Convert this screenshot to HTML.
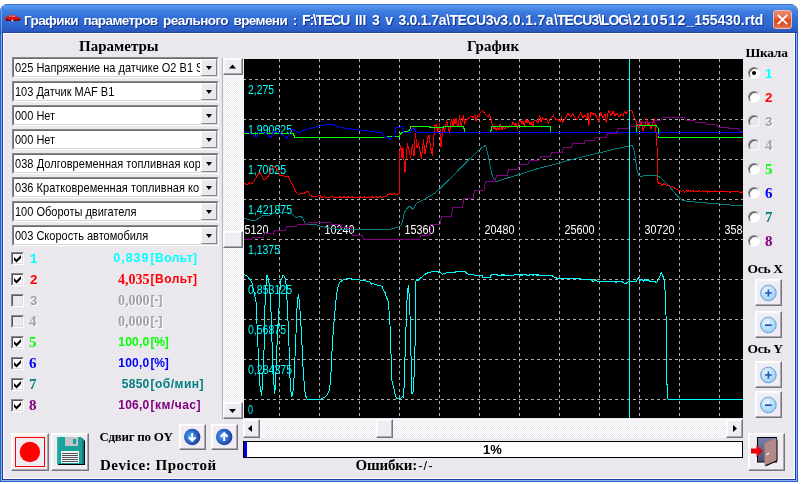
<!DOCTYPE html>
<html lang="ru"><head><meta charset="utf-8"><title>Графики параметров реального времени</title>
<style>
html,body{margin:0;padding:0;background:#fff;}
body{width:803px;height:484px;position:relative;overflow:hidden;will-change:transform;font-family:"Liberation Sans",sans-serif;}
.abs{position:absolute;}
#win{position:absolute;left:0;top:4px;width:798px;height:478px;background:#2a5cd0;border-radius:8px 8px 0 0;overflow:hidden;}
#title{position:absolute;left:0;top:0;width:798px;height:29px;background:linear-gradient(#2856c4 0%,#5b9af0 5%,#5291ea 12%,#3f7fe0 24%,#3370d8 45%,#2e67d0 70%,#2c5fc8 86%,#2a56bc 95%,#1c3c98 100%);}
#ttext{position:absolute;left:24px;top:9px;color:#fff;font:bold 14px/15px "Liberation Sans",sans-serif;white-space:pre;text-shadow:1px 1px 0 #14308a;}
#client{position:absolute;left:4px;top:30px;width:790px;height:444px;background:#ebe8ed;}
#cwhite{position:absolute;left:3px;top:29px;width:792px;height:446px;background:#fff;}
#close{position:absolute;left:773px;top:6px;width:17px;height:17px;border:1px solid #f2b9aa;border-radius:3px;background:linear-gradient(#e98a6e 0%,#df6c4a 42%,#e04a1e 52%,#da5630 80%,#e27c5e 100%);}
.h{font:bold 15px "Liberation Serif",serif;color:#000;white-space:nowrap;}
.hs{font:bold 13px/15px "Liberation Serif",serif;color:#000;white-space:nowrap;letter-spacing:-0.3px}
.combo{position:absolute;left:12px;width:207px;height:21px;box-sizing:border-box;background:#fff;border:1px solid;border-color:#8a8a8a #fff #fff #8a8a8a;}
.combo .in{position:absolute;left:0;top:0;right:0;bottom:0;border:1px solid;border-color:#6a6a6a #d8d5da #d8d5da #6a6a6a;}
.combo span{position:absolute;left:2px;top:3px;font:11px/13px "Liberation Sans",sans-serif;color:#000;white-space:nowrap;overflow:hidden;width:185px;transform:scaleY(1.125);transform-origin:0 0;}
.combo b{position:absolute;right:1px;top:1px;width:16px;height:17px;box-sizing:border-box;background:#ebe8ee;border:1px solid;border-color:#fff #8a8a8a #8a8a8a #fff;}
.combo b:after{content:"";position:absolute;left:3.5px;top:6px;border:4px solid transparent;border-top:4px solid #000;border-bottom:none;border-left-width:3.5px;border-right-width:3.5px}
.btn{position:absolute;box-sizing:border-box;background:#efedf1;border:1px solid;border-color:#fff #77757d #77757d #fff;box-shadow:inset -1px -1px 0 #a9a7af,inset 1px 1px 0 #faf9fb;}
.track{position:absolute;background:repeating-conic-gradient(#fff 0 25%,#ebe8ee 0 50%) 0 0/2px 2px;}
.cb{position:absolute;left:11px;width:13px;height:13px;box-sizing:border-box;background:#fff;border:1px solid;border-color:#8a8a8a #fff #fff #8a8a8a;}
.cb i{position:absolute;left:0;top:0;right:0;bottom:0;border:1px solid;border-color:#55555a #dcdae0 #dcdae0 #55555a;}
.cb.dis{background:#ebe8ee}
.num{position:absolute;left:29px;font:bold 15px/15px "Liberation Serif",serif;white-space:nowrap;}
.num.a{font:bold 13.33px/15px "Liberation Sans",sans-serif;left:30px}
.val{position:absolute;right:653.5px;font:bold 12px/15px "Liberation Sans",sans-serif;white-space:nowrap;text-align:right;letter-spacing:0.25px}
.val.s{font-family:"Liberation Serif",serif;font-size:14px;letter-spacing:0}
.unit{position:absolute;left:150.5px;font:bold 12px/15px "Liberation Sans",sans-serif;white-space:nowrap;letter-spacing:0.5px}
.dis{color:#a3a1a6;text-shadow:1px 1px 0 #fff;}
.radio{position:absolute;left:748px;width:12px;height:12px;border-radius:50%;box-sizing:border-box;background:#fff;border:1px solid;border-color:#8a888e #fbfafc #fbfafc #8a888e;box-shadow:inset 1px 1px 0 #56555a;}
.rnum{position:absolute;left:765px;font:bold 15px/15px "Liberation Serif",serif;white-space:nowrap;}
.rnum.a{font:bold 13.33px/15px "Liberation Sans",sans-serif;}
</style></head><body>
<svg width="0" height="0" style="position:absolute"><defs>
<radialGradient id="gb" cx="0.4" cy="0.45" r="0.65"><stop offset="0" stop-color="#52b0f4"/><stop offset="0.55" stop-color="#2c66cc"/><stop offset="1" stop-color="#1a2f86"/></radialGradient>
<radialGradient id="gl" cx="0.4" cy="0.35" r="0.7"><stop offset="0" stop-color="#eaf6ff"/><stop offset="0.6" stop-color="#b6dcf6"/><stop offset="1" stop-color="#9ccdf2"/></radialGradient>
<linearGradient id="gd" x1="0" y1="0" x2="0" y2="1"><stop offset="0" stop-color="#7a80a8"/><stop offset="1" stop-color="#4a5070"/></linearGradient>
</defs></svg>
<div id="win">
 <div id="title"><svg width="18" height="9" viewBox="0 0 18 9" style="position:absolute;left:4px;top:10px"><path d="M0.800 4.200C1.200 3.200 2.500 2.800 3.800 2.600L5.200 1.300C7 0.700 9.500 0.700 10.800 1.200L12.500 2.800C14.500 3 16.500 3.600 16.800 4.800L16.500 6 14.500 6.800 4 6.800 1.500 6z" fill="#d81414"/><path d="M4.600 2.600L5.800 1.600 7.500 1.400V2.600zM8.200 1.400H10.400L11.600 2.700H8.200z" fill="#f0a8a0"/><path d="M1 5.200C5 5.900 12 6 16.800 5L16.500 6 14.500 6.900H4L1.500 6z" fill="#6a0606"/><ellipse cx="8.300" cy="6.500" rx="0.900" ry="1.100" fill="#e8e0d8"/><ellipse cx="3.200" cy="6.200" rx="0.800" ry="0.900" fill="#400"/></svg><div id="ttext"><span style="font-size:13.5px;letter-spacing:-0.6px;word-spacing:2.4px">Графики параметров реального времени : </span><span style="letter-spacing:-1.15px">F:\TECU</span><span style="letter-spacing:-0.08px;word-spacing:1.8px"> III 3 v </span><span style="letter-spacing:-0.38px">3.0.1.7a</span><span style="letter-spacing:-0.48px">\TECU3v</span><span style="letter-spacing:0.37px">3.0.1.7a</span><span style="letter-spacing:-0.9px">\TECU3</span><span style="letter-spacing:-1.12px">\LOG</span><span style="letter-spacing:1.1px">\210512</span><span style="letter-spacing:0">_155430.rtd</span></div>
 <div style="position:absolute;left:1px;top:6px;width:1px;height:23px;background:rgba(190,220,255,0.45)"></div>
 <div id="close"><svg width="19" height="19" viewBox="0 0 19 19" style="position:absolute;left:-1px;top:-1px"><path d="M4.800 4.800L14.200 14.200M14.200 4.800L4.800 14.200" stroke="#fff" stroke-width="1.800" stroke-linecap="butt"/></svg></div></div>
 <div style="position:absolute;left:1px;top:29px;width:796px;height:448px;background:#8fb8ee"></div><div style="position:absolute;left:2px;top:29px;width:794px;height:447px;background:#1a3aa0"></div>
 <div id="cwhite"></div>
 <div id="client"></div>
</div>
<div class="abs h" style="left:79px;top:38px">Параметры</div>
<div class="abs h" style="left:467px;top:38px">График</div>
<div class="combo" style="top:57px"><div class="in"></div><span>025 Напряжение на датчике O2 B1 S1</span><b></b></div>
<div class="combo" style="top:81px"><div class="in"></div><span>103 Датчик MAF B1</span><b></b></div>
<div class="combo" style="top:105px"><div class="in"></div><span>000 Нет</span><b></b></div>
<div class="combo" style="top:129px"><div class="in"></div><span>000 Нет</span><b></b></div>
<div class="combo" style="top:153px"><div class="in"></div><span style="letter-spacing:0.06px">038 Долговременная топливная коррекция</span><b></b></div>
<div class="combo" style="top:177px"><div class="in"></div><span style="letter-spacing:0.05px">036 Кратковременная топливная коррекция</span><b></b></div>
<div class="combo" style="top:201px"><div class="in"></div><span>100 Обороты двигателя</span><b></b></div>
<div class="combo" style="top:225px"><div class="in"></div><span>003 Скорость автомобиля</span><b></b></div>

<!-- checkbox rows -->
<div class="cb" style="top:252px"><i></i><svg width="13" height="13" viewBox="0 0 13 13" style="position:absolute;left:-1px;top:-1px"><path d="M3 5V8L5.5 10.5 10 6V3L5.5 7.5z" fill="#000"/></svg></div><div class="num a" style="top:251px;color:#00ffff">1</div><div class="val" style="top:251px;color:#00ffff;font-size:12.5px;letter-spacing:1px">0,839</div><div class="unit" style="top:251px;color:#00ffff">[Вольт]</div>
<div class="cb" style="top:273px"><i></i><svg width="13" height="13" viewBox="0 0 13 13" style="position:absolute;left:-1px;top:-1px"><path d="M3 5V8L5.5 10.5 10 6V3L5.5 7.5z" fill="#000"/></svg></div><div class="num a" style="top:272px;color:#ff0000">2</div><div class="val s" style="top:272px;color:#ff0000">4,035</div><div class="unit" style="top:272px;color:#ff0000">[Вольт]</div>
<div class="cb dis" style="top:294px"><i></i></div><div class="num a dis" style="top:293px">3</div><div class="val s dis" style="top:293px">0,000</div><div class="unit dis" style="top:293px"><span style="letter-spacing:0">[-]</span></div>
<div class="cb dis" style="top:315px"><i></i></div><div class="num dis" style="top:314px">4</div><div class="val s dis" style="top:314px">0,000</div><div class="unit dis" style="top:314px"><span style="letter-spacing:0">[-]</span></div>
<div class="cb" style="top:336px"><i></i><svg width="13" height="13" viewBox="0 0 13 13" style="position:absolute;left:-1px;top:-1px"><path d="M3 5V8L5.5 10.5 10 6V3L5.5 7.5z" fill="#000"/></svg></div><div class="num" style="top:335px;color:#00ff00">5</div><div class="val" style="top:335px;color:#00ff00">100,0</div><div class="unit" style="top:335px;color:#00ff00"><span style="letter-spacing:-0.2px">[%]</span></div>
<div class="cb" style="top:357px"><i></i><svg width="13" height="13" viewBox="0 0 13 13" style="position:absolute;left:-1px;top:-1px"><path d="M3 5V8L5.5 10.5 10 6V3L5.5 7.5z" fill="#000"/></svg></div><div class="num" style="top:356px;color:#0000ff">6</div><div class="val" style="top:356px;color:#0000ff">100,0</div><div class="unit" style="top:356px;color:#0000ff"><span style="letter-spacing:-0.2px">[%]</span></div>
<div class="cb" style="top:378px"><i></i><svg width="13" height="13" viewBox="0 0 13 13" style="position:absolute;left:-1px;top:-1px"><path d="M3 5V8L5.5 10.5 10 6V3L5.5 7.5z" fill="#000"/></svg></div><div class="num" style="top:377px;color:#008080">7</div><div class="val" style="top:377px;color:#008080">5850</div><div class="unit" style="top:377px;color:#008080">[об/мин]</div>
<div class="cb" style="top:399px"><i></i><svg width="13" height="13" viewBox="0 0 13 13" style="position:absolute;left:-1px;top:-1px"><path d="M3 5V8L5.5 10.5 10 6V3L5.5 7.5z" fill="#000"/></svg></div><div class="num" style="top:398px;color:#800080">8</div><div class="val" style="top:398px;color:#800080">106,0</div><div class="unit" style="top:398px;color:#800080">[км/час]</div>

<!-- vertical scrollbar -->
<div class="abs" style="left:222px;top:58px;width:1px;height:361px;background:#b4b2b8"></div><div class="track" style="left:223px;top:58px;width:21px;height:361px"></div>
<div class="btn" style="left:223px;top:58px;width:20px;height:17px"><svg width="20" height="17" style="position:absolute;left:-1px;top:-1px"><path d="M6 10.500h7l-3.500-4z" fill="#000"/></svg></div>
<div class="btn" style="left:223px;top:231px;width:20px;height:17px"></div>
<div class="btn" style="left:223px;top:402px;width:20px;height:17px"><svg width="20" height="17" style="position:absolute;left:-1px;top:-1px"><path d="M6 7h7l-3.500 4z" fill="#000"/></svg></div>

<svg id="graph" width="499" height="359" viewBox="244 59 499 359" style="position:absolute;left:244px;top:59px;background:#000" shape-rendering="auto">
<path d="M244 79.5H743M244 119.5H743M244 159.5H743M244 199.5H743M244 239.5H743M244 279.5H743M244 319.5H743M244 359.5H743M244 399.5H743" stroke="#b0b0b0" stroke-width="1" stroke-dasharray="3 3" stroke-dashoffset="1" fill="none" shape-rendering="crispEdges"/>
<path d="M279.5 59V418M319.5 59V418M359.5 59V418M399.5 59V418M439.5 59V418M479.5 59V418M519.5 59V418M559.5 59V418M599.5 59V418M639.5 59V418M679.5 59V418M719.5 59V418" stroke="#b0b0b0" stroke-width="1" stroke-dasharray="3 3" fill="none" shape-rendering="crispEdges"/>
<g fill="#00ffff" font-family="Liberation Sans, sans-serif" font-size="12.5"><text x="248" y="94" textLength="26" lengthAdjust="spacingAndGlyphs">2,275</text><text x="248" y="134" textLength="44" lengthAdjust="spacingAndGlyphs">1,990625</text><text x="248" y="174" textLength="38" lengthAdjust="spacingAndGlyphs">1,70625</text><text x="248" y="214" textLength="44" lengthAdjust="spacingAndGlyphs">1,421875</text><text x="248" y="254" textLength="32" lengthAdjust="spacingAndGlyphs">1,1375</text><text x="248" y="294" textLength="44" lengthAdjust="spacingAndGlyphs">0,853125</text><text x="248" y="334" textLength="38" lengthAdjust="spacingAndGlyphs">0,56875</text><text x="248" y="374" textLength="44" lengthAdjust="spacingAndGlyphs">0,284375</text><text x="248" y="414" textLength="5" lengthAdjust="spacingAndGlyphs">0</text></g>
<g fill="#ffffff" font-family="Liberation Sans, sans-serif" font-size="12.5"><text x="244.5" y="234" textLength="24" lengthAdjust="spacingAndGlyphs">5120</text><text x="324.5" y="234" textLength="30" lengthAdjust="spacingAndGlyphs">10240</text><text x="404.5" y="234" textLength="30" lengthAdjust="spacingAndGlyphs">15360</text><text x="484.5" y="234" textLength="30" lengthAdjust="spacingAndGlyphs">20480</text><text x="564.5" y="234" textLength="30" lengthAdjust="spacingAndGlyphs">25600</text><text x="644.5" y="234" textLength="30" lengthAdjust="spacingAndGlyphs">30720</text><text x="724.5" y="234" textLength="30" lengthAdjust="spacingAndGlyphs">35840</text></g>
<path d="M244 274.5 L247 276 L250 279.5 L252 283 L254 292 L256 302 L256.8 320 L257.5 335 L258.2 352 L259 372 L260 386 L261.5 395.5 L262.5 385 L263.5 360 L264.5 340 L265 305 L266 285 L266.5 276 L267 275.5 L268 278 L269.5 285 L270.2 297 L271 312 L271.5 327 L272 342 L273 365 L274 385 L274.6 393.5 L275.5 385 L276 372 L277 345 L277.8 328 L279 308 L280 290 L281 280 L283 275.5 L284 276 L285.5 279.3 L286.3 286 L287 300 L287.8 317 L288.5 330 L289 346 L289.8 375 L291 392 L292 396.5 L293 391.5 L294 378 L295 357 L296 334 L297 308 L298 297 L298.5 294.5 L299.5 304 L300.6 318 L301.2 330 L302 345 L303 367 L304 381 L305 392 L306 396.5 L307 399 L321 399 L324.5 397.3 L327 395 L329 391.5 L330 385 L331 372.5 L332 351 L333 335 L334 322 L335.5 306 L336.3 297 L337.3 290 L338.3 285.5 L340 282 L343 280 L347.5 278.6 L352 279 L358 279.5 L362.4 280.8 L366 281 L370 282 L371.5 284.2 L373 283 L374.4 284.5 L378 285.3 L382 286.3 L383.3 289.4 L385 292.4 L386 296 L388 300.8 L389 310.4 L390 325.3 L390.6 342 L391.2 360 L391.8 380.6 L393.5 386.6 L395 394 L396.5 398.4 L399.8 398.6 L401 398 L402.5 396.3 L403.5 397.8 L404.2 385 L404.7 365 L405.5 346 L406.2 320 L407 300 L408 288 L408.5 286 L409.2 295.5 L410 315 L410.6 338 L411.2 363 L411.8 393.3 L412.8 393.6 L413.6 386.6 L414.3 370 L414.8 354 L415.3 335 L415.5 282 L416.8 279.7 L417.8 281 L419.5 279 L422.5 276.3 L426.5 273.3 L432.5 271.5 L437 271.5 L440.4 272.7 L442.6 274.2 L445.4 273.5 L447 272.5 L455 272.5 L456 271.5 L465 271.5 L466 272.5 L467.5 274 L473 274.5 L474.5 275.5 L482 275.5 L483 277.5 L490 277.5 L491 275.5 L492 274.5 L497 274.5 L498 275.5 L501 275.5 L502 274.5 L503 275.5 L504 274.5 L505 275.5 L513.5 275.5 L514.5 274.5 L519 274.5 L520 275.5 L521 274.5 L522 275.5 L523 274.5 L526 274.5 L527 275.5 L529 275.5 L530 274.5 L532 274.5 L533 275.5 L534 274.5 L536 274.5 L537 275.5 L538 274.5 L539 275.5 L552 275.5 L553.8 277 L556 277.5 L557 278.5 L580 278.5 L581 279.5 L591.4 279.6 L592.8 281.4 L594 281 L595 279 L596.3 281 L615 281.5 L616 282.5 L617 281.5 L622 281.5 L623 282.4 L624 283 L626.5 283 L628.3 281.5 L636 281.5 L637 279.7 L638.5 278 L640.4 281 L642 279 L643.7 281.6 L645 279.5 L646.7 281 L648 279.6 L650 281.5 L655 281.5 L656.4 282.7 L658 280 L660 276 L661.4 272.6 L663 276.5 L664.3 279.8 L665 289.5 L665.5 300 L666 315 L666.4 330 L666.4 384 L667.6 384.5 L667.6 399 L743 399" stroke="#00ffff" stroke-width="1" fill="none" stroke-linejoin="round" shape-rendering="crispEdges"/>
<path d="M244 183 L247 185 L250 182.5 L252 183.5 L256 178 L259 173 L260 172.5 L262 176 L264 179.5 L267 178 L269 175 L272 168 L274 166.5 L276 168 L278 171 L280 175.5 L288 176.5 L290 180 L293 186 L295 190.5 L297 193 L299 195 L301 193 L303 194 L306 192 L308 191.5 L310 195 L312 196.5 L314 196 L316 197 L318 196 L320 195.5 L322 197.5 L324 196.5 L326 197.5 L328 197 L330 197.8 L332 196.5 L334 197.5 L336 197 L338 197.8 L340 196.8 L342 197.6 L344 196.8 L346 197.6 L348 196.8 L350 197.5 L352 196.8 L354 197.6 L356 197 L358 197.6 L360 196.8 L362 197.5 L364 196.8 L366 197.5 L368 197 L370 197.6 L372 196.8 L374 197.5 L376 196.8 L378 197.5 L380 196.8 L382 197.4 L384 196.8 L386 197 L388 194.5 L390 193.5 L392 195 L394 193 L396 195 L398 194 L399.5 193 L399.6 152.8 L400.7 145 L402 158 L403 148 L405 172.5 L407.4 143.6 L409 150 L410.6 158.4 L412.3 144.3 L414 156 L415.4 133 L417 148 L418.5 143 L421.4 159 L423.5 140 L425 154 L427.8 138 L429 135 L430.5 147 L432.3 155.6 L434.8 125.4 L436.5 124.5 L438 132 L439.7 123 L441 147 L443.2 126 L444.5 132 L446.7 120.4 L448 126 L449.6 133.6 L450.5 124 L451.7 119.7 L453 126 L454 119.5 L455 124 L456 118 L457 124 L458 127 L459.6 115.6 L460.5 123 L461.5 126 L462.5 118 L463.6 116 L464.6 124.5 L465.5 122 L467 119.5 L469 118 L471 116 L473 117.5 L475 115 L476 120.5 L477.6 115.6 L479 117 L480 112.8 L482.5 110.3 L484 112.5 L486 115 L488 117 L489.5 114.3 L491 119.3 L492 124.3 L493 126.5 L494 129 L495 126 L496.3 130.5 L497.5 127 L499 130 L500 123.7 L501 127 L502 130 L503 126 L505 129.3 L506 126 L508 127.5 L509.5 125.5 L511 127 L513 122.4 L515 126 L516 123 L517.5 129.3 L519 122 L520.6 120.5 L522 124 L523 121 L524.4 126 L526 118.7 L527 123 L528 120 L530 125 L531 122 L533 126.8 L534 121 L536 119.8 L538 123 L539.6 115.6 L541 122 L542.5 118 L544 120 L546 118 L548.5 123.7 L550 119 L553.5 115.8 L556 120 L558 119 L560 122 L561.5 117 L562.8 122.4 L566 117 L567.8 113.2 L571 117 L572.8 113.7 L575 118 L577 120 L579 116 L580.8 112.5 L583 118 L585 115 L587 119 L588 113 L588.8 125.5 L590.8 112.5 L593 114.5 L595 113 L597 118 L598.8 121.8 L600.8 112.6 L603 118 L605 114 L606.4 123 L608 113 L609 110.6 L611 116 L613 111 L615 116 L617 113 L619 117 L621 114 L623 116 L624.5 112 L626 114 L628 110.8 L630 110 L632 111 L634 117 L636 121 L637 126 L638 124 L639 128.5 L641 121 L643 130.6 L645 126 L646.4 118.8 L648 125 L649 122 L651 129 L653 123 L654.6 118.3 L655.5 128 L656.3 136 L657 146 L657.5 165 L657.7 182 L658.8 183.8 L660 182.8 L661 184 L662 185.5 L664 183.5 L666 185 L668 185.5 L670 186 L673 187 L676 189 L678.6 190.3 L680 190.4 L681.6 191.2 L683.2 190.4 L684.8 192.1 L686.4 190.5 L688 191.3 L689.6 190.5 L691.2 191.4 L692.8 190.6 L694.4 191.4 L696 191.4 L697.6 191.5 L699.2 190.7 L700.8 191.5 L702.4 190.7 L704 191.5 L705.6 190.8 L707.2 192.4 L708.8 190.8 L710.4 191.6 L712 190.9 L713.6 191.7 L715.2 190.9 L716.8 191.7 L718.4 191.7 L720 191.8 L721.6 191 L723.2 191.8 L724.8 191 L726.4 191.9 L728 191.1 L729.6 192.7 L731.2 191.1 L732.8 192 L734.4 191.2 L736 192 L737.6 191.2 L739.2 192 L740.8 192.1 L742.4 192.1 L743 191.5" stroke="#ff0000" stroke-width="1" fill="none" stroke-linejoin="round" shape-rendering="crispEdges"/>
<path d="M244 133.5 L293.5 133.5 L294.5 137.5 L386.5 137.5 L388 136.5 L399.5 136.5 L400.6 133.5 L402.4 132.5 L406 131.5 L409.5 130.5 L410.9 126.5 L429 126.5 L430 127.5 L443 127.5 L444 126.5 L463.5 126.5 L465 132.5 L490.5 132.5 L492 126.5 L550.5 126.5 L551 132.5 L636 132.5 L636.5 125.5 L656 125.5 L658 128 L659 137.5 L743 137.5" stroke="#00ff00" stroke-width="1" fill="none" stroke-linejoin="round" shape-rendering="crispEdges"/>
<path d="M244 131.5 L248 132.5 L252 134.5 L256.5 137.5 L259 132 L263 132.5 L267 134 L271 137.5 L274 131.5 L278 132 L282 134.5 L287 138.5 L291 130 L294 129.5 L299 133 L303 130.5 L310 128.5 L318 126.5 L325 125 L330 124.3 L333.5 124.3 L337 126.5 L344 128 L349 128 L351 129.5 L358 129.5 L360 130.5 L366 130.5 L368 131.5 L374 131.5 L376 132.5 L381 132.5 L383 134 L385 137.5 L388 138 L390 139.5 L392 137 L395 136.5 L395.2 127.5 L399.6 127.5 L400.3 126 L402.4 126 L402.9 129 L403.3 132.5 L410.6 132.5 L411.6 129.6 L413 128.6 L414.8 129 L415.8 131 L416.5 132.5 L657 132.5 L659 136 L661 132.5 L743 132.5" stroke="#0000ff" stroke-width="1" fill="none" stroke-linejoin="round" shape-rendering="crispEdges"/>
<path d="M244 218 L248 219.5 L252 220.5 L256 220 L260 217.5 L263 215.6 L270 215 L274 213 L280 212 L290 212 L293 215 L296 218 L298 217 L300 216 L302 217.5 L304 221 L306 224.3 L308 225 L312 224 L316 224.5 L320 226 L324 227 L330 228.5 L340 229.3 L350 229.5 L388 229.5 L394 228.5 L398 227 L401 225.3 L402.6 222 L403.6 214.8 L405 211.5 L407 208.5 L409 206.3 L411 207.3 L413 209.4 L415 206 L416.5 203.5 L420 201.5 L424 199.5 L430 196 L435 193 L440 188.5 L452 176.8 L466 162.6 L478 151 L482 147.6 L485 145.6 L486 147 L488 155 L490 165 L492 174.4 L494 179 L496 181.5 L507.5 178 L519.5 174.4 L536.5 169 L554 164.5 L570 160 L590 155 L610 150.3 L626 146.5 L632.5 145.6 L634 150 L635.5 159 L637 170 L639 175.6 L641 176.5 L645 175.4 L657.5 175.4 L660.5 177.8 L664 181 L668.5 185.3 L672 189.6 L676 194.5 L680 198.5 L683 200.5 L690 201.6 L700 202.5 L710 203.2 L720 204 L730 205 L735 205.6 L743 205.6" stroke="#008080" stroke-width="1" fill="none" stroke-linejoin="round" shape-rendering="crispEdges"/>
<path d="M244 239.5 L251 239.5 L252.5 237.5 L263 237.5 L264.5 233.5 L273 233.5 L274.5 230.5 L285 230.5 L286.5 226.5 L296 226.5 L297.5 224.5 L307 224.5 L308.5 222.5 L330.5 222.5 L332 224.5 L340.5 224.5 L342 227.5 L351 227.5 L352.5 235.5 L362.4 235.5 L363.9 239.5 L419 239.5 L420.5 235.5 L429.5 235.5 L431 224.3 L440 224.3 L441.5 216.3 L451.3 216.3 L452.8 207.4 L462.5 207.4 L464 198.5 L473 198.5 L474.5 190.5 L484 190.5 L485.5 181.5 L495 181.5 L496.5 175.5 L507 175.5 L508.5 169.5 L518 169.5 L519.5 164 L528 164 L529.5 160 L539 160 L540.5 156.5 L550 156.5 L551.5 152.5 L562 152.5 L563.5 147.5 L571.5 147.5 L573 143.5 L584 143.5 L585.5 140 L594.5 140 L596 137.5 L606 137.5 L607.5 133 L616.5 133 L618 128.5 L628 128.5 L629.5 126.5 L638.5 126.5 L640 122.5 L654 122.5 L655.5 120 L661 120 L662.5 117.5 L684 117.5 L685.5 120 L694 120 L695.5 122.5 L705 122.5 L706.5 124.5 L716.5 124.5 L718 127 L727.5 127 L729 128.5 L738 128.5 L739.5 131 L743 131" stroke="#800080" stroke-width="1" fill="none" stroke-linejoin="round" shape-rendering="crispEdges"/>
<path d="M629.5 59V418" stroke="#00ffff" stroke-width="1" fill="none" shape-rendering="crispEdges"/>
</svg>

<!-- horizontal scrollbar -->
<div class="track" style="left:243px;top:419px;width:500px;height:19px"></div>
<div class="btn" style="left:243px;top:419px;width:17px;height:19px"><svg width="17" height="19" style="position:absolute;left:-1px;top:-1px"><path d="M9 6v7l-4-3.500z" fill="#000"/></svg></div>
<div class="btn" style="left:376px;top:419px;width:17px;height:19px"></div>
<div class="btn" style="left:726px;top:419px;width:17px;height:19px"><svg width="17" height="19" style="position:absolute;left:-1px;top:-1px"><path d="M7 6v7l4-3.500z" fill="#000"/></svg></div>

<!-- progress -->
<div class="abs" style="left:243px;top:441px;width:500px;height:17px;box-sizing:border-box;border:1px solid #000;background:#fff"></div>
<div class="abs" style="left:244px;top:442px;width:3px;height:15px;background:#0000e0"></div>
<div class="abs" style="left:477.5px;top:442px;width:30px;text-align:center;font:bold 13px/15px 'Liberation Sans',sans-serif">1%</div>

<!-- bottom left -->
<div class="btn" style="left:11px;top:433px;width:38px;height:38px"><svg width="38" height="38" style="position:absolute;left:-1px;top:-1px"><rect x="4.5" y="4.5" width="29" height="29" fill="none" stroke="#ff0000"/><circle cx="18.9" cy="19" r="10.2" fill="#ff0000"/></svg></div>
<div class="btn" style="left:51px;top:433px;width:38px;height:38px"><svg width="38" height="38" style="position:absolute;left:-1px;top:-2px"><path d="M7 6h24l3 3v24H7z" fill="#000"/><path d="M6 5h24l3 3v24H6z" fill="#17a39b"/><path d="M6 5h1.500v27H6z" fill="#2fb5ac"/><path d="M31 8h2v24h-2z" fill="#0e7f7a"/><rect x="14" y="5" width="13" height="9" fill="#c4c4c8"/><rect x="22" y="7" width="3" height="5" fill="#17a39b"/><rect x="10" y="19" width="18" height="12" fill="#f4f4f4"/><path d="M11 21.5h16M11 23.5h16M11 25.5h16M11 27.5h16M11 29.5h16" stroke="#555" stroke-width="1"/></svg></div>
<div class="abs hs" style="left:99.5px;top:429px">Сдвиг по OY</div>
<div class="btn" style="left:179px;top:424px;width:27px;height:26px"><svg width="27" height="26" style="position:absolute;left:-1px;top:-1px"><circle cx="13.2" cy="13" r="8.2" fill="url(#gb)"/><path d="M13.2 9v7.500M9.800 13.200l3.400 3.600 3.400-3.600" stroke="#fff" stroke-width="2" fill="none"/></svg></div>
<div class="btn" style="left:211px;top:424px;width:27px;height:26px"><svg width="27" height="26" style="position:absolute;left:-1px;top:-1px"><circle cx="13.2" cy="13" r="8.2" fill="url(#gb)"/><path d="M13.2 17v-7.500M9.800 12.800l3.400-3.600 3.400 3.600" stroke="#fff" stroke-width="2" fill="none"/></svg></div>
<div class="abs" style="left:100px;top:458px;font:bold 15px/15px 'Liberation Serif',serif;white-space:nowrap;letter-spacing:0.53px">Device: Простой</div>
<div class="abs" style="left:355.5px;top:458px;font:bold 15px/15px 'Liberation Serif',serif;white-space:nowrap;letter-spacing:-0.15px">Ошибки:<span style="font:13px 'Liberation Sans',sans-serif;letter-spacing:1px;margin-left:1px">-/-</span></div>

<!-- right panel -->
<div class="abs hs" style="left:745.5px;top:45px;font-size:13.5px">Шкала</div>
<div class="radio" style="top:67px"><span style="position:absolute;left:3px;top:3px;width:4px;height:4px;border-radius:50%;background:#000"></span></div><div class="rnum a" style="top:66px;color:#00ffff">1</div>
<div class="radio" style="top:91px"></div><div class="rnum a" style="top:90px;color:#ff0000">2</div>
<div class="radio" style="top:115px;background:#ebe8ed"></div><div class="rnum a dis" style="top:114px">3</div>
<div class="radio" style="top:139px;background:#ebe8ed"></div><div class="rnum dis" style="top:138px">4</div>
<div class="radio" style="top:163px"></div><div class="rnum" style="top:162px;color:#00ff00">5</div>
<div class="radio" style="top:187px"></div><div class="rnum" style="top:186px;color:#0000ff">6</div>
<div class="radio" style="top:211px"></div><div class="rnum" style="top:210px;color:#008080">7</div>
<div class="radio" style="top:235px"></div><div class="rnum" style="top:234px;color:#800080">8</div>
<div class="abs hs" style="left:747.5px;top:261px;font-size:13.5px">Ось X</div>
<div class="btn" style="left:755px;top:279px;width:27px;height:27px"><svg width="27" height="27" style="position:absolute;left:-1px;top:-1px"><circle cx="13.4" cy="14" r="7.8" fill="url(#gl)" stroke="#5f9fe0" stroke-width="1"/><path d="M10 14h6.800M13.400 10.600v6.800" stroke="#2257b8" stroke-width="1.700" fill="none"/></svg></div>
<div class="btn" style="left:755px;top:311px;width:27px;height:27px"><svg width="27" height="27" style="position:absolute;left:-1px;top:-1px"><circle cx="13.4" cy="14" r="7.8" fill="url(#gl)" stroke="#5f9fe0" stroke-width="1"/><path d="M10 14.200h6.800" stroke="#2257b8" stroke-width="1.700" fill="none"/></svg></div>
<div class="abs hs" style="left:747.5px;top:341px;font-size:13.5px">Ось Y</div>
<div class="btn" style="left:755px;top:361px;width:27px;height:27px"><svg width="27" height="27" style="position:absolute;left:-1px;top:-1px"><circle cx="13.4" cy="14" r="7.8" fill="url(#gl)" stroke="#5f9fe0" stroke-width="1"/><path d="M10 14h6.800M13.400 10.600v6.800" stroke="#2257b8" stroke-width="1.700" fill="none"/></svg></div>
<div class="btn" style="left:755px;top:391px;width:27px;height:27px"><svg width="27" height="27" style="position:absolute;left:-1px;top:-1px"><circle cx="13.4" cy="14" r="7.8" fill="url(#gl)" stroke="#5f9fe0" stroke-width="1"/><path d="M10 14.200h6.800" stroke="#2257b8" stroke-width="1.700" fill="none"/></svg></div>
<div class="btn" style="left:748px;top:433px;width:37px;height:38px"><svg width="37" height="38" style="position:absolute;left:-1px;top:-1px"><rect x="9.5" y="4.5" width="19" height="24.500" fill="url(#gd)" stroke="#000"/><path d="M17.500 11.500L29.500 6.500V28L17.500 33.500z" fill="#000"/><path d="M16.500 10L28.500 5V27.500L16.500 32.500z" fill="#b38a88"/><path d="M3 15.500h5.500V12l6.500 6-6.500 6v-3.500H3z" fill="#e8000c"/><path d="M18.500 21l2.500-1.500v1.500l-2.500 1.500z" fill="#fff"/></svg></div>
</body></html>
